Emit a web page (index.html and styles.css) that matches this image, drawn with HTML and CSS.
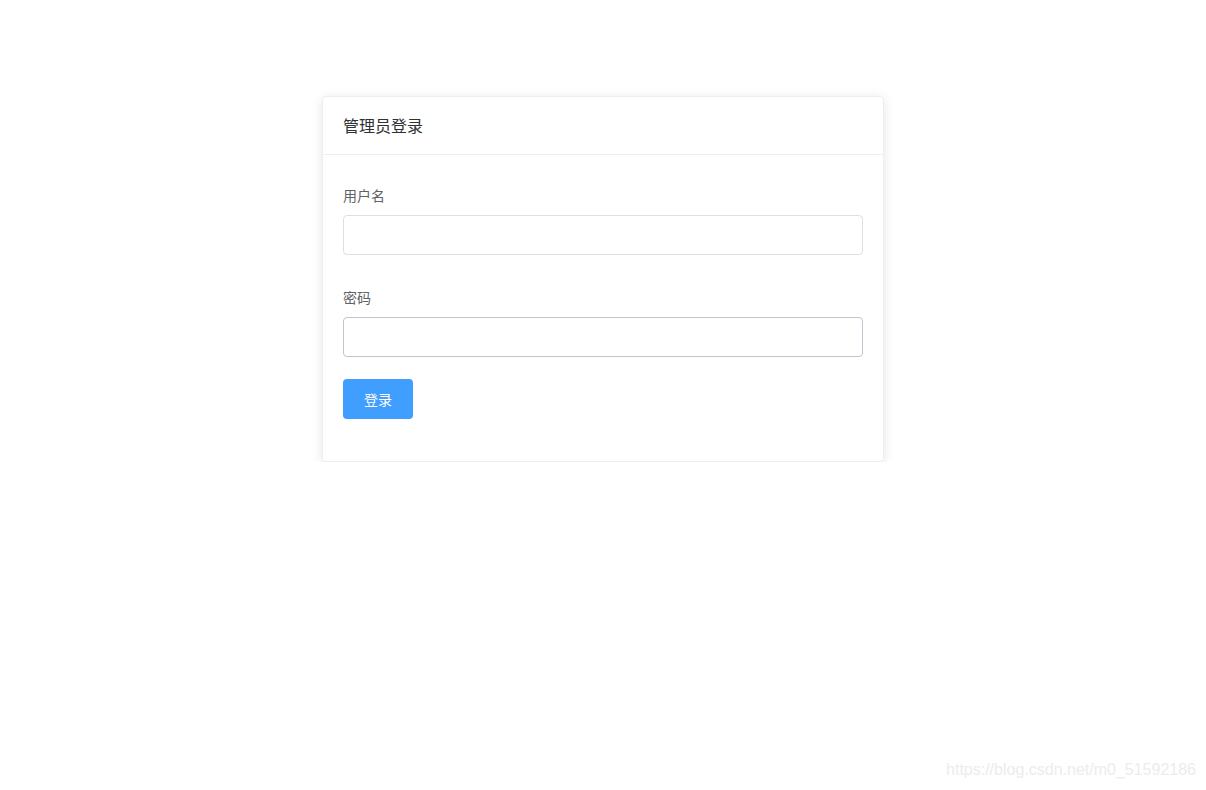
FILE: index.html
```html
<!DOCTYPE html>
<html lang="zh-CN">
<head>
    <meta charset="utf-8">
    <link rel="stylesheet" href="styles.css">
    <title>管理员登录</title>
</head>
<body>
    <div class="page">
        <div class="login-card">
            <div class="card-header">管理员登录</div>
            <form class="card-body" id="login-form">
                <div class="form-item">
                    <label class="form-label" for="username">用户名</label>
                    <input class="form-input" type="text" id="username" name="username">
                </div>
                <div class="form-item">
                    <label class="form-label" for="password">密码</label>
                    <input class="form-input form-input-hover" type="password" id="password" name="password">
                </div>
                <div class="form-item">
                    <button class="btn-primary" type="button">登录</button>
                </div>
            </form>
        </div>
    </div>

    <div class="watermark">https://blog.csdn.net/m0_51592186</div>
</body>
</html>
```

FILE: styles.css
```css
body {
    margin: 0;
    background: #fff;
    font-family: "Noto Sans CJK SC", "Liberation Sans", sans-serif;
}

.page {
    display: flex;
    justify-content: center;
    padding-top: 96px;
}

.login-card {
    width: 560px;
    background: #fff;
    border: 1px solid #ebeef5;
    border-radius: 4px;
    box-shadow: 0 2px 12px 0 rgba(0, 0, 0, 0.1);
    color: #303133;
}

.card-header {
    padding: 18px 20px;
    height: 21px;
    line-height: 21px;
    font-size: 16px;
    border-bottom: 1px solid #ebeef5;
}

.card-body {
    padding: 20px;
    margin: 0;
    display: flex;
    flex-direction: column;
}

.form-item {
    display: flex;
    flex-direction: column;
    align-items: flex-start;
    margin-bottom: 22px;
}

.form-label {
    font-size: 14px;
    line-height: 40px;
    height: 40px;
    color: #606266;
}

.form-input {
    box-sizing: border-box;
    width: 100%;
    height: 40px;
    padding: 0 15px;
    border: 1px solid #dcdfe6;
    border-radius: 4px;
    font-size: 14px;
    color: #606266;
    outline: none;
}

.form-input-hover {
    border-color: #c0c4cc;
}

.btn-primary {
    width: 70px;
    height: 40px;
    background-color: #409eff;
    border: none;
    border-radius: 4px;
    color: #fff;
    font-family: inherit;
    font-size: 14px;
    cursor: pointer;
}

.watermark {
    position: absolute;
    right: 10px;
    top: 761px;
    font-family: "Liberation Sans", sans-serif;
    font-size: 16px;
    color: #ececec;
}
```
